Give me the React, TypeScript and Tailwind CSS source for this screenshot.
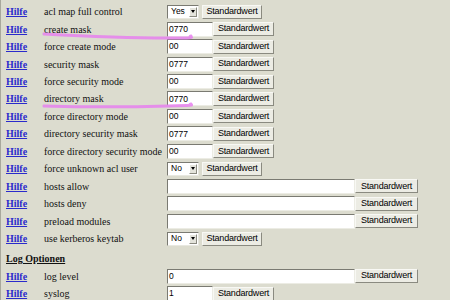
import React from 'react';

type Row =
  | { label: string; kind: 'select'; value: string }
  | { label: string; kind: 'input'; value: string }
  | { label: string; kind: 'wide'; value: string };

const rows: Row[] = [
  { label: 'acl map full control', kind: 'select', value: 'Yes' },
  { label: 'create mask', kind: 'input', value: '0770' },
  { label: 'force create mode', kind: 'input', value: '00' },
  { label: 'security mask', kind: 'input', value: '0777' },
  { label: 'force security mode', kind: 'input', value: '00' },
  { label: 'directory mask', kind: 'input', value: '0770' },
  { label: 'force directory mode', kind: 'input', value: '00' },
  { label: 'directory security mask', kind: 'input', value: '0777' },
  { label: 'force directory security mode', kind: 'input', value: '00' },
  { label: 'force unknown acl user', kind: 'select', value: 'No' },
  { label: 'hosts allow', kind: 'wide', value: '' },
  { label: 'hosts deny', kind: 'wide', value: '' },
  { label: 'preload modules', kind: 'wide', value: '' },
  { label: 'use kerberos keytab', kind: 'select', value: 'No' },
];

const logRows: Row[] = [
  { label: 'log level', kind: 'wide', value: '0' },
  { label: 'syslog', kind: 'input', value: '1' },
];

function StdButton({ w }: { w: string }) {
  return (
    <span className={`inline-flex h-[14px] ${w} items-center justify-center border border-t-[#f8f8f4] border-l-[#f8f8f4] border-r-[#8a8a80] border-b-[#8a8a80] bg-[#ecece4] text-[9px] text-black [font-family:'Liberation_Sans',sans-serif] tracking-[-0.2px]`}>
      Standardwert
    </span>
  );
}

function Field({ row }: { row: Row }) {
  if (row.kind === 'select') {
    return (
      <div className="flex items-center gap-[3px]">
        <div className="flex h-[14px] w-[32px] items-center justify-between border border-t-[#7a7a72] border-l-[#7a7a72] border-r-[#e8e8e0] border-b-[#e8e8e0] bg-white pl-[3px] pr-[1px]">
          <span className="text-[8.5px] [font-family:'Liberation_Sans',sans-serif]">{row.value}</span>
          <span className="flex h-[10px] w-[8px] items-center justify-center border border-t-white border-l-white border-r-[#8a8a80] border-b-[#8a8a80] bg-[#e4e4dc]">
            <svg width="4" height="3" viewBox="0 0 4 3"><path d="M0 0h4L2 3z" fill="#000" /></svg>
          </span>
        </div>
        <StdButton w="w-[60px]" />
      </div>
    );
  }
  const wide = row.kind === 'wide';
  return (
    <div className="flex items-center">
      <div className={`flex h-[15px] ${wide ? 'w-[188px]' : 'w-[46px]'} items-center border border-t-[#7a7a72] border-l-[#7a7a72] border-r-[#ecece4] border-b-[#ecece4] bg-white pl-[1px]`}>
        <span className="text-[8.5px] [font-family:'Liberation_Sans',sans-serif]">{row.value}</span>
      </div>
      <StdButton w={wide ? 'w-[63px]' : 'w-[61px]'} />
    </div>
  );
}

function Line({ row }: { row: Row }) {
  return (
    <div className="flex h-[17.46px] items-center">
      <a className="w-[43px] pl-[5px] text-[10px] font-bold text-[#2a2acc] underline [font-family:'Liberation_Serif',serif]">Hilfe</a>
      <span className="w-[123px] whitespace-nowrap text-[10px] text-[#111] [font-family:'Liberation_Serif',serif]">{row.label}</span>
      <Field row={row} />
    </div>
  );
}

export default function App() {
  return (
    <div className="relative h-[300px] w-[450px] overflow-hidden border-l border-[#a8a89c] bg-[#dcdccf] pt-[3px]">
      {rows.map((r) => (
        <Line key={r.label} row={r} />
      ))}
      <div className="flex h-[19px] items-end pl-[5px]">
        <span className="text-[10px] font-bold text-[#111] underline [font-family:'Liberation_Serif',serif]">Log Optionen</span>
      </div>
      <div className="h-[1px]" />
      {logRows.map((r) => (
        <Line key={r.label} row={r} />
      ))}
      <svg className="pointer-events-none absolute left-0 top-0" width="450" height="300">
        <path d="M43 34 C 80 36, 130 38, 167 38 S 185 37, 190 36" stroke="#e680ee" strokeWidth="3" fill="none" strokeLinecap="round" opacity="0.85" />
        <path d="M43 106 C 80 107, 130 107, 167 106 S 185 105, 190 104" stroke="#e680ee" strokeWidth="3" fill="none" strokeLinecap="round" opacity="0.85" />
      </svg>
    </div>
  );
}
